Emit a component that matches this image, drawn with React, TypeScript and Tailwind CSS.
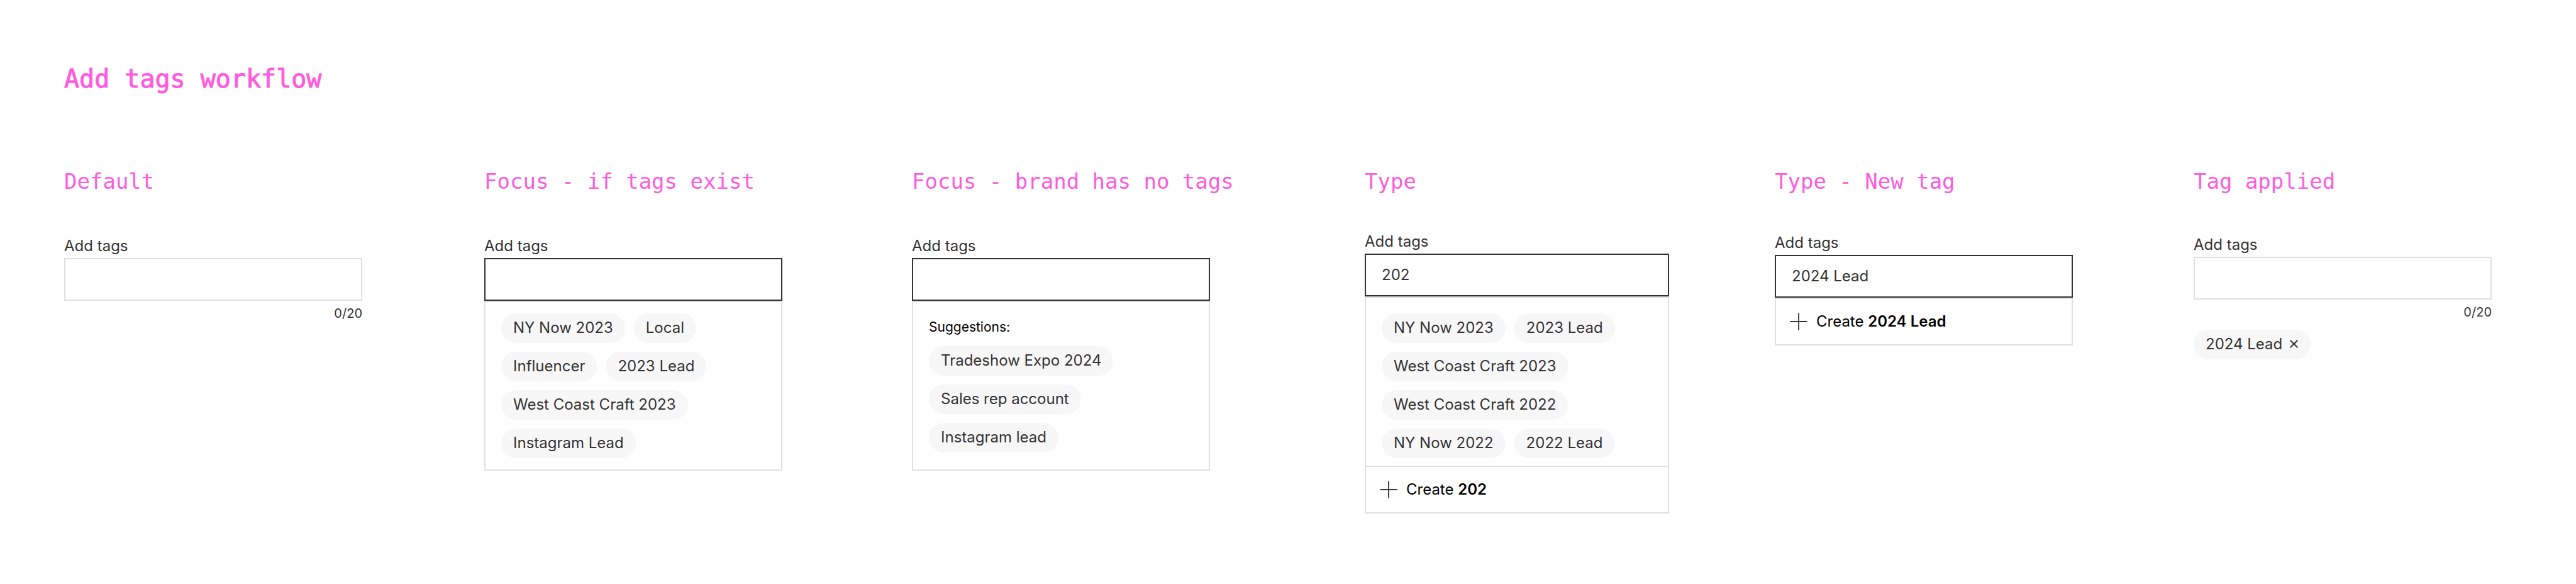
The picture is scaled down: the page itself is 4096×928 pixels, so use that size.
import { useId, type ReactNode } from "react";

const sans = "font-['Inter','Liberation_Sans',sans-serif]";
const mono = "font-['DejaVu_Sans_Mono','Liberation_Mono',monospace]";

function Column({ title, spacing, wide, children }: { title: string; spacing: string; wide?: boolean; children: ReactNode }) {
  return (
    <section>
      <h2 className={`${mono} text-[34px] leading-10 whitespace-nowrap text-[#ff5bde]`}>{title}</h2>
      <div className={`${spacing} ${wide ? "max-w-[484px]" : "max-w-[474px]"}`}>{children}</div>
    </section>
  );
}

function TagField({ value = "", active = false }: { value?: string; active?: boolean }) {
  const id = useId();
  return (
    <div className="flex flex-col gap-[5px]">
      <label htmlFor={id} className="text-2xl leading-7">
        Add tags
      </label>
      <input
        id={id}
        type="text"
        defaultValue={value}
        className={`h-[68px] w-full border-2 bg-white px-[25px] pb-0.5 text-2xl outline-none ${active ? "border-[#333333]" : "border-[#e0e0e0]"}`}
      />
    </div>
  );
}

function Count() {
  return <p className="mt-2 text-right text-[20px] leading-6">0/20</p>;
}

function Tag({ children }: { children: string }) {
  return (
    <button type="button" className="h-[47px] rounded-full bg-[#f7f7f7] px-[19px] pb-0.5 text-2xl whitespace-nowrap">
      {children}
    </button>
  );
}

function TagRows({ rows }: { rows: string[][] }) {
  return (
    <div className="flex flex-col gap-3.5">
      {rows.map((row) => (
        <div key={row[0]} className="flex gap-3.5">
          {row.map((tag) => (
            <Tag key={tag}>{tag}</Tag>
          ))}
        </div>
      ))}
    </div>
  );
}

function CreateRow({ name }: { name: string }) {
  return (
    <button type="button" className="flex h-[72px] w-full items-center gap-3.5 px-[22px] text-left text-2xl text-black">
      <svg viewBox="0 0 28 28" className="size-7" fill="none" stroke="#333333" strokeWidth="1.8" aria-hidden="true">
        <path d="M14 .5v27M.5 14h27" />
      </svg>
      <span>
        Create <span className="font-semibold">{name}</span>
      </span>
    </button>
  );
}

export default function App() {
  return (
    <main className={`${sans} min-h-screen bg-white pt-[101px] pb-28 pl-[102px] text-[#333333]`}>
      <h1 className={`${mono} text-[40px] leading-[48px] text-[#ff5bde] [-webkit-text-stroke:1px_#ff5bde]`}>Add tags workflow</h1>
      <div className="mt-[119px] grid grid-cols-[668fr_680fr_720fr_652fr_666fr_608fr]">
        <Column title="Default" spacing="mt-[69px]">
          <TagField />
          <Count />
        </Column>

        <Column title="Focus - if tags exist" spacing="mt-[69px]">
          <TagField active />
          <div className="border-2 border-[#e0e0e0] px-[25px] py-[18px]">
            <TagRows rows={[["NY Now 2023", "Local"], ["Influencer", "2023 Lead"], ["West Coast Craft 2023"], ["Instagram Lead"]]} />
          </div>
        </Column>

        <Column title="Focus - brand has no tags" spacing="mt-[69px]">
          <TagField active />
          <div className="border-2 border-[#e0e0e0] px-[25px] pt-7 pb-[27px]">
            <p className="mb-[18px] text-[21px] leading-6 text-black">Suggestions:</p>
            <TagRows rows={[["Tradeshow Expo 2024"], ["Sales rep account"], ["Instagram lead"]]} />
          </div>
        </Column>

        <Column title="Type" spacing="mt-[62px]" wide>
          <TagField active value="202" />
          <div className="border-2 border-[#e0e0e0]">
            <div className="border-b-2 border-[#e0e0e0] px-[25px] pt-[25px] pb-3">
              <TagRows rows={[["NY Now 2023", "2023 Lead"], ["West Coast Craft 2023"], ["West Coast Craft 2022"], ["NY Now 2022", "2022 Lead"]]} />
            </div>
            <CreateRow name="202" />
          </div>
        </Column>

        <Column title="Type - New tag" spacing="mt-[64px]">
          <TagField active value="2024 Lead" />
          <div className="border-2 border-[#e0e0e0]">
            <CreateRow name="2024 Lead" />
          </div>
        </Column>

        <Column title="Tag applied" spacing="mt-[67px]">
          <TagField />
          <Count />
          <span className="mt-4 inline-flex h-[47px] items-center gap-2.5 rounded-full bg-[#f7f7f7] px-[19px] pb-0.5 text-2xl">
            2024 Lead
            <button type="button" aria-label="Remove 2024 Lead" className="flex size-4 items-center justify-center">
              <svg viewBox="0 0 13 13" className="size-[13px]" fill="none" stroke="#333333" strokeWidth="2" aria-hidden="true">
                <path d="M.7.7l11.6 11.6M12.3.7L.7 12.3" />
              </svg>
            </button>
          </span>
        </Column>
      </div>
    </main>
  );
}
